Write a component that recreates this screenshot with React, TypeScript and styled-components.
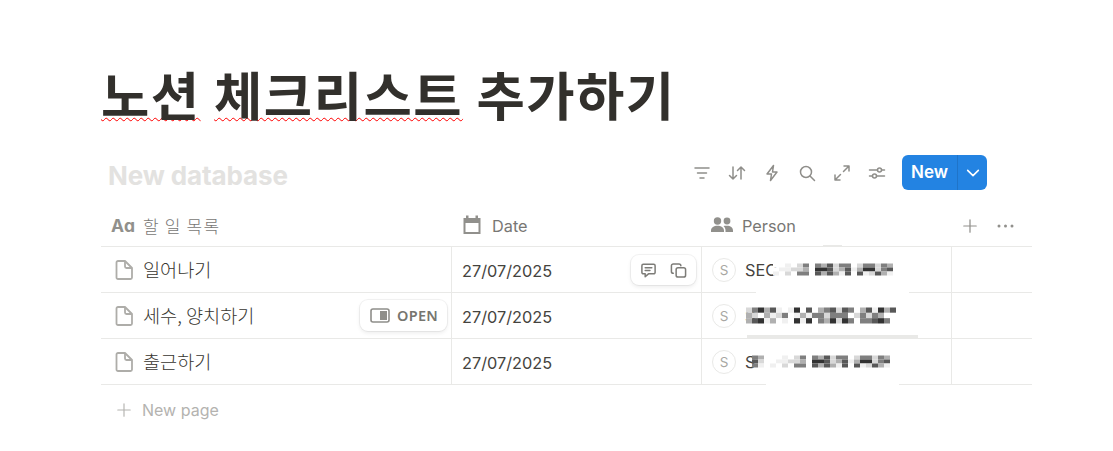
import React from "react";
import styled, { createGlobalStyle } from "styled-components";

const Global = createGlobalStyle`
  html, body { margin: 0; padding: 0; background: #fff; overflow: hidden; }
  body { font-family: Inter, "Noto Sans CJK KR", sans-serif; color: #37352f; }
`;
const Page = styled.div`
  width: 931px; height: 451px; margin-left: 101px; padding-top: 58px; box-sizing: border-box;
`;
const Title = styled.h1`
  margin: 0; height: 70px; white-space: nowrap; letter-spacing: 1.5px;
  font: 700 52.5px/70px "Noto Sans CJK KR", sans-serif; color: #32302c;
`;
const Squiggly = styled.span`
  text-decoration: underline wavy #f00 1px; text-underline-offset: 1px; text-decoration-skip-ink: none;
`;
const Toolbar = styled.div`
  margin-top: 27px; margin-bottom: 15px; height: 35px; display: flex; align-items: center; padding: 0 45px 0 7px;
`;
const DbName = styled.div`
  flex: 1; padding-top: 6px; font: 700 26px/29px Inter, sans-serif; color: #e3e2e0; letter-spacing: -0.12px;
`;
const Tools = styled.div`
  display: flex; gap: 17px; align-items: center; margin-right: 16px; color: #8f8e8a;
`;
const NewButton = styled.div`
  display: flex; width: 85px; height: 35px; border-radius: 6px; background: #2383e2; color: #fff; overflow: hidden;
`;
const NewLabel = styled.div`
  width: 55px; font: 600 17px/35px Inter, sans-serif; text-align: center; border-right: 1px solid #1f74c9;
`;
const NewCaret = styled.div`
  flex: 1; display: flex; align-items: center; justify-content: center;
`;
const Row = styled.div<{ $h: number }>`
  display: grid; grid-template-columns: 351px 250px 250px 80px; height: ${p => p.$h}px;
  border-bottom: 1px solid #e9e9e7; box-sizing: border-box;
`;
const HeadCell = styled.div`
  display: flex; align-items: center; gap: 10px; padding-left: 10px; color: #787774;
  font: 400 16.3px/24px Inter, "Noto Sans CJK KR", sans-serif; padding-top: 1px;
`;
const HeadIcon = styled.svg`
  flex: none; margin-top: -3px; overflow: visible;
`;
const PersonHead = styled(HeadCell)`
  padding-left: 9px; gap: 9px;
`;
const TypeGlyph = styled.span`
  flex: none; width: 22px; font: 700 17.5px/24px Inter, sans-serif; color: #91908c; letter-spacing: 0;
`;
const KoreanHead = styled.span`
  font-family: "Noto Sans CJK KR", sans-serif; font-size: 17px; font-weight: 300; letter-spacing: 1.2px;
`;
const HeadActions = styled.div`
  display: flex; align-items: center; gap: 19px; padding-left: 10px; padding-top: 1px; color: #91908c;
`;
const Cell = styled.div<{ $border?: boolean }>`
  position: relative; display: flex; align-items: center; padding-left: 10px; color: #45433e;
  font: 400 16.3px/24px Inter, "Noto Sans CJK KR", sans-serif;
  border-right: ${p => (p.$border === false ? "0" : "1px solid #e9e9e7")};
`;
const NameCell = styled(Cell)`
  padding-left: 14px;
`;
const NameText = styled.span`
  margin-left: 10px; font-family: "Noto Sans CJK KR", sans-serif; font-size: 18.6px; font-weight: 300; margin-top: -2px; color: #37352f;
`;
const DateText = styled.span`
  margin-top: 2px;
`;
const HoverBox = styled.div`
  position: absolute; background: #fff; border-radius: 8px; display: flex; align-items: center;
  box-shadow: 0 0 0 1px rgba(15,15,15,0.05), 0 2px 4px rgba(15,15,15,0.08);
`;
const OpenBox = styled(HoverBox)`
  right: 4px; top: 7px; height: 31px; width: 87px; padding-left: 10px; gap: 7px; box-sizing: border-box;
  font: 600 14.5px/31px "Noto Sans", sans-serif; color: #77766f; letter-spacing: 0.3px;
`;
const ActionBox = styled(HoverBox)`
  right: 5px; top: 8px; height: 30px; width: 65px; justify-content: center; gap: 13px;
`;
const Avatar = styled.div`
  width: 24px; height: 24px; border-radius: 50%; border: 1px solid #e9e9e7; box-sizing: border-box;
  display: flex; align-items: center; justify-content: center; font: 400 13.5px Inter, sans-serif; color: #a8a7a3;
  flex: none;
`;
const PersonCell = styled(Cell)`
  gap: 9px;
`;
const Mail = styled.span`
  position: relative; white-space: nowrap;
`;
const Mosaic = styled.svg`
  position: absolute; left: 0; top: 0; overflow: visible;
`;
const NewPage = styled.div`
  height: 50px; display: flex; align-items: center; gap: 10px; padding-left: 15px; color: #b4b3b0;
  font: 400 16px/24px Inter, sans-serif;
`;
const Patch = styled.div<{ $l: number; $t: number; $w: number; $h: number; $c?: string }>`
  position: absolute; left: ${p => p.$l}px; top: ${p => p.$t}px; width: ${p => p.$w}px; height: ${p => p.$h}px;
  background: ${p => p.$c || "#fff"};
`;
const IconSvg = styled.svg`
  flex: none;
`;

const Ico = ({ children, w = 18, sw = 1.5, c = "currentColor" }: { children: React.ReactNode; w?: number; sw?: number; c?: string }) => (
  <IconSvg width={w} height={w} viewBox="0 0 18 18" fill="none" stroke={c} strokeWidth={sw} strokeLinecap="round" strokeLinejoin="round">{children}</IconSvg>
);

const PageIcon = () => (
  <IconSvg width="18" height="20" viewBox="0 0 18 20" fill="none" stroke="#aeada9" strokeWidth="1.8" strokeLinejoin="round">
    <path d="M3 1h7l7 7v9.500a1.500 1.500 0 0 1-1.500 1.500H3a1.500 1.500 0 0 1-1.500-1.500V2.500A1.500 1.500 0 0 1 3 1z" />
    <path d="M10 1v5.500A1.500 1.500 0 0 0 11.500 8H17" />
  </IconSvg>
);

const ramp = ["#ffffff", "#f0f0f0", "#d8d8d8", "#b0b0b0", "#7f7f7f", "#585858", "#323232"];
const patternA = [
  "00102404352440244243",
  "01122306652351366245",
  "10204405353150512531",
];
const patternB = [
  "2463510160503452540351635",
  "3203124013144244402424300",
  "3561301061604362640445640",
];
const patternC = [
  "43000102404352440244243",
  "52001122306652351366245",
  "41010204405353150512531",
];

const MosaicBlock = ({ grid, x, y, rh }: { grid: string[]; x: number; y: number; rh: number }) => (
  <Mosaic width="1" height="24">
    {grid.map((line, r) =>
      line.split("").map((v, c) => (
        <rect key={`${r}-${c}`} x={x + c * 6} y={y + r * rh} width={6} height={rh} fill={ramp[Number(v)]} />
      ))
    )}
  </Mosaic>
);

const rows = [
  { name: "일어나기", open: false, act: true, mail: "SEC", grid: patternA, mx: 28, my: 5.5, rh: 4 },
  { name: "세수, 양치하기", open: true, act: false, mail: "S", grid: patternB, mx: 1, my: 3.5, rh: 5.33 },
  { name: "출근하기", open: false, act: false, mail: "S", grid: patternC, mx: 7, my: 5.5, rh: 4 },
];

export default function App() {
  return (
    <Page>
      <Global />
      <Title>
        <Squiggly>노션</Squiggly> <Squiggly>체크리스트</Squiggly> 추가하기
      </Title>
      <Toolbar>
        <DbName>New database</DbName>
        <Tools>
          <Ico><path d="M2 4h14M4.500 9h9M7 14h4" /></Ico>
          <Ico><path d="M5 3v12M1.500 11.500 5 15l3.500-3.500M13 15V3M9.500 6.500 13 3l3.500 3.500" /></Ico>
          <Ico><path d="M10.500 1.500 4 10h4.500l-1 6.500L14 8H9.500z" /></Ico>
          <Ico><circle cx="8" cy="8" r="5.500" /><path d="m12 12 4.500 4.500" /></Ico>
          <Ico><path d="M11 2h5v5M16 2l-5.500 5.500M7 16H2v-5M2 16l5.500-5.500" /></Ico>
          <Ico><path d="M1.500 6h8M13.500 6h3M1.500 12h3M8.500 12h8" /><circle cx="11.500" cy="6" r="2" /><circle cx="6.500" cy="12" r="2" /></Ico>
        </Tools>
        <NewButton>
          <NewLabel>New</NewLabel>
          <NewCaret>
            <Ico w={16} sw={1.8} c="#fff"><path d="m3 6 6 6 6-6" /></Ico>
          </NewCaret>
        </NewButton>
      </Toolbar>
      <Row $h={42}>
        <HeadCell>
          <TypeGlyph>Aɑ</TypeGlyph>
          <KoreanHead>할 일 목록</KoreanHead>
        </HeadCell>
        <HeadCell>
          <HeadIcon width="20" height="19" viewBox="0 0 20 19">
            <path fillRule="evenodd" fill="#91908c" d="M1.500 3H4V.5h2.500V3h7V.5H16V3h2.500v16h-17zM3.500 8v9h13V8z" />
          </HeadIcon>
          <span>Date</span>
        </HeadCell>
        <PersonHead>
          <HeadIcon width="22" height="15" viewBox="0 0 22 15">
            <g fill="#91908c">
              <circle cx="6.500" cy="4" r="3.700" />
              <circle cx="16" cy="4" r="3.400" />
              <path d="M0 15v-1.500C0 10.500 3 8.700 6.500 8.700S13 10.500 13 13.500V15zM14.500 15v-1.500c0-2-.7-3.500-2-4.600 1-.2 2.500-.3 3.500-.2 3.500 0 6 1.800 6 4.800V15z" />
            </g>
          </HeadIcon>
          <span>Person</span>
        </PersonHead>
        <HeadActions>
          <Ico w={16} sw={1.4}><path d="M9 2v14M2 9h14" /></Ico>
          <IconSvg width="17" height="4" viewBox="0 0 17 4"><g fill="#91908c"><circle cx="2" cy="2" r="1.500" /><circle cx="8.500" cy="2" r="1.500" /><circle cx="15" cy="2" r="1.500" /></g></IconSvg>
        </HeadActions>
      </Row>
      {rows.map((r, i) => (
        <Row $h={46} key={r.name}>
          <NameCell>
            <PageIcon />
            <NameText>{r.name}</NameText>
            {r.open && (
              <OpenBox>
                <IconSvg width="20" height="15" viewBox="0 0 20 15"><rect x="1" y="1" width="18" height="13" rx="2" fill="none" stroke="#8f8e8a" strokeWidth="1.600" /><rect x="10" y="3" width="7" height="9" fill="#8f8e8a" /></IconSvg>
                OPEN
              </OpenBox>
            )}
          </NameCell>
          <Cell>
            <DateText>27/07/2025</DateText>
            {r.act && (
              <ActionBox>
                <Ico w={17} sw={1.6} c="#7d7c78"><path d="M3.500 2.500h11a1.500 1.500 0 0 1 1.500 1.500v7a1.500 1.500 0 0 1-1.500 1.500H9l-3.500 3V12.500h-2A1.500 1.500 0 0 1 2 11V4a1.500 1.500 0 0 1 1.500-1.500zM5.500 6h7M5.500 9h5" /></Ico>
                <Ico w={17} sw={1.6} c="#7d7c78"><rect x="6.500" y="6" width="10" height="10" rx="2" /><path d="M3.500 12A2 2 0 0 1 1.500 10V4a2 2 0 0 1 2-2h6a2 2 0 0 1 2 2" /></Ico>
              </ActionBox>
            )}
          </Cell>
          <PersonCell>
            <Avatar>S</Avatar>
            <Mail>
              {r.mail}
              <MosaicBlock grid={r.grid} x={r.mx} y={r.my} rh={r.rh} />
            </Mail>
            {i === 0 && <Patch $l={121} $t={-2} $w={19} $h={1} $c="#e9e9e7" />}
            {i === 0 && <Patch $l={54} $t={45} $w={153} $h={1} />}
            {i === 1 && <Patch $l={45} $t={42} $w={171} $h={3} $c="#e9e9e7" />}
            {i === 2 && <Patch $l={64} $t={45} $w={133} $h={1} />}
          </PersonCell>
          <Cell $border={false} />
        </Row>
      ))}
      <NewPage>
        <Ico w={16} sw={1.3}><path d="M9 2v14M2 9h14" /></Ico>
        New page
      </NewPage>
    </Page>
  );
}
